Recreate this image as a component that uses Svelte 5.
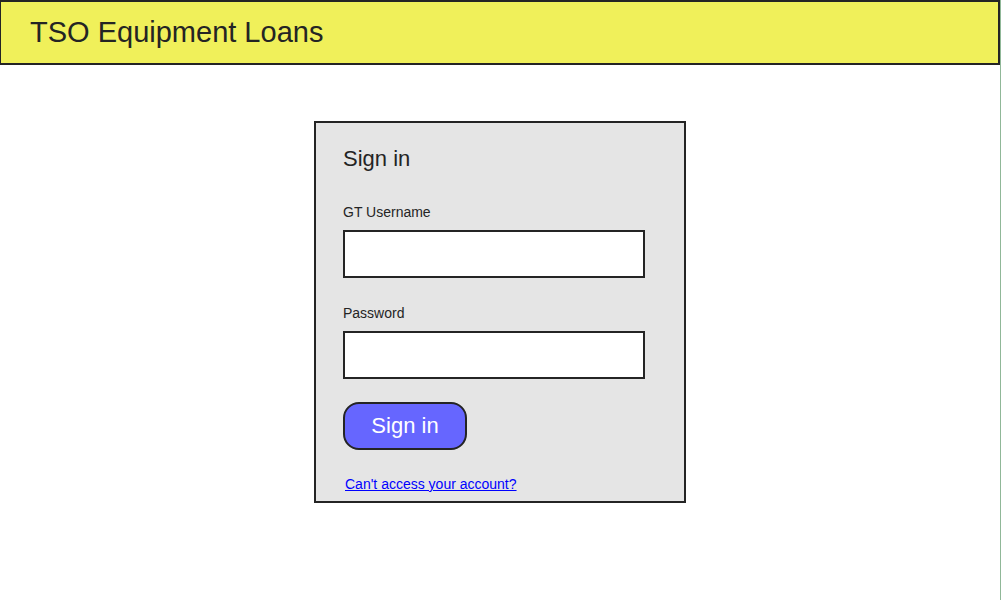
<script>
  let username = $state('');
  let password = $state('');
</script>

<div class="page">
  <header>
    <h1>TSO Equipment Loans</h1>
  </header>
  <main>
    <form onsubmit={(event) => event.preventDefault()}>
      <h2>Sign in</h2>
      <div class="fields">
        <div class="field">
          <label for="username">GT Username</label>
          <input id="username" type="text" autocomplete="username" bind:value={username} />
        </div>
        <div class="field">
          <label for="password">Password</label>
          <input id="password" type="password" autocomplete="current-password" bind:value={password} />
        </div>
      </div>
      <button type="submit">Sign in</button>
      <a href="#recover">Can't access your account?</a>
    </form>
  </main>
</div>

<style>
  :global(body) {
    margin: 0;
    background: #fff;
  }

  .page {
    box-sizing: border-box;
    min-height: 100vh;
    border-right: 1px solid #90b898;
    font-family: "Liberation Sans", Arial, sans-serif;
    color: #242424;
  }

  header {
    box-sizing: border-box;
    padding: 14px 29px;
    border: 2px solid #242424;
    border-left-width: 1px;
    background: #f0f05a;
  }

  h1,
  h2 {
    margin: 0;
    font-weight: 400;
  }

  h1 {
    font-size: 29px;
    line-height: 33px;
  }

  main {
    display: flex;
    justify-content: center;
    padding: 56px 16px;
  }

  form {
    box-sizing: border-box;
    display: flex;
    flex-direction: column;
    width: 100%;
    max-width: 372px;
    padding: 22px 39px 8px 27px;
    border: 2px solid #242424;
    background: #e5e5e5;
  }

  h2 {
    margin-bottom: 30px;
    font-size: 22px;
    line-height: 28px;
  }

  .fields {
    display: flex;
    flex-direction: column;
    gap: 26px;
    margin-bottom: 23px;
  }

  .field {
    display: flex;
    flex-direction: column;
    gap: 9px;
  }

  label {
    font-size: 14px;
    line-height: 18px;
  }

  input {
    box-sizing: border-box;
    width: 100%;
    height: 48px;
    padding: 0 10px;
    border: 2px solid #242424;
    border-radius: 0;
    background: #fff;
    font: inherit;
    font-size: 16px;
  }

  button {
    align-self: flex-start;
    box-sizing: border-box;
    width: 124px;
    height: 48px;
    margin-bottom: 25px;
    padding: 0;
    border: 2px solid #242424;
    border-radius: 16px;
    background: #66f;
    color: #fff;
    font: inherit;
    font-size: 22px;
  }

  a {
    align-self: flex-start;
    margin-left: 2px;
    color: #00f;
    font-size: 14px;
    line-height: 18px;
  }
</style>
